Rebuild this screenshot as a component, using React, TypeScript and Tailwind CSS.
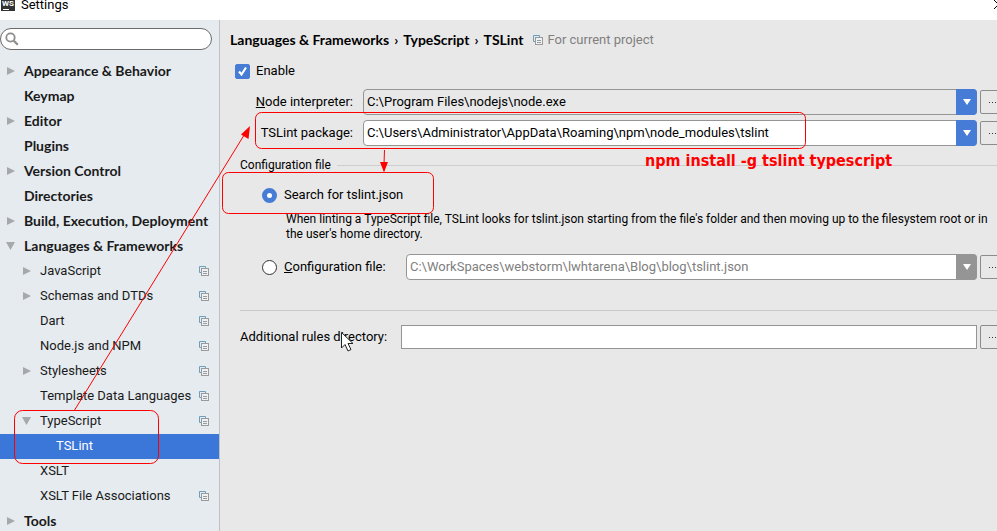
import { useId, useState } from "react";
import type { ReactNode } from "react";

type TreeItem = {
  label: string;
  level: 0 | 1 | 2;
  state?: "open" | "closed";
  project?: boolean;
};

const items: TreeItem[] = [
  { label: "Appearance & Behavior", level: 0, state: "closed" },
  { label: "Keymap", level: 0 },
  { label: "Editor", level: 0, state: "closed" },
  { label: "Plugins", level: 0 },
  { label: "Version Control", level: 0, state: "closed" },
  { label: "Directories", level: 0 },
  { label: "Build, Execution, Deployment", level: 0, state: "closed" },
  { label: "Languages & Frameworks", level: 0, state: "open" },
  { label: "JavaScript", level: 1, state: "closed", project: true },
  { label: "Schemas and DTDs", level: 1, state: "closed", project: true },
  { label: "Dart", level: 1, project: true },
  { label: "Node.js and NPM", level: 1, project: true },
  { label: "Stylesheets", level: 1, state: "closed", project: true },
  { label: "Template Data Languages", level: 1, project: true },
  { label: "TypeScript", level: 1, state: "open", project: true },
  { label: "TSLint", level: 2 },
  { label: "XSLT", level: 1 },
  { label: "XSLT File Associations", level: 1, project: true },
  { label: "Tools", level: 0, state: "closed" },
];

const indent = { 0: "pl-1.5", 1: "pl-[22px]", 2: "pl-[38px]" };

function ProjectIcon() {
  return (
    <svg className="size-2.5 shrink-0" viewBox="0 0 10 10" fill="none" aria-hidden="true">
      <path d="M2 6.500H.5V.5H6.500V2" stroke="#6aa0bd" />
      <rect x="2.5" y="2.5" width="7" height="7" stroke="#9a9a9a" fill="#eef1f3" />
      <path d="M4 5.500h4M4 7.500h4" stroke="#9a9a9a" />
    </svg>
  );
}

function Twisty({ state }: { state?: "open" | "closed" }) {
  return (
    <svg className="size-2.5 shrink-0" viewBox="0 0 10 10" fill="#a6a8aa" aria-hidden="true">
      {state === "closed" && <path d="M1 1 9 5 1 9Z" />}
      {state === "open" && <path d="M0 1H9L4.500 9Z" />}
    </svg>
  );
}

function Sidebar() {
  const [selected, setSelected] = useState("TSLint");
  return (
    <nav className="w-[220px] shrink-0 border-r border-[#bfc2c4] bg-[#e5ebef] pt-2" aria-label="Settings">
      <label className="mr-[7px] flex h-[22px] items-center rounded-full border border-[#6b6b6b] bg-white pl-1">
        <svg className="size-3.5 shrink-0" viewBox="0 0 14 14" fill="none" stroke="#8c8c8c" aria-hidden="true">
          <circle cx="5.5" cy="5.5" r="4.2" strokeWidth="1.8" />
          <path d="m8.800 8.800 4 4" strokeWidth="2.2" />
        </svg>
        <input type="search" aria-label="Search settings" className="min-w-0 flex-1 bg-transparent px-1 outline-none" />
      </label>
      <ul className="pt-[9px]">
        {items.map((item) => (
          <li key={item.label}>
            <button
              type="button"
              onClick={() => setSelected(item.label)}
              className={`flex h-[25px] w-full items-center gap-2 pr-2.5 pb-0.5 text-left whitespace-nowrap ${indent[item.level]} ${
                item.level === 0 ? "font-['Lato','Open_Sans',sans-serif] text-sm leading-5 font-bold" : ""
              } ${item.label === selected ? "bg-[#3b76d9] text-white" : "text-[#1a1a1a]"}`}
            >
              <Twisty state={item.state} />
              <span className="min-w-0 flex-1">{item.label}</span>
              {item.project && <ProjectIcon />}
            </button>
          </li>
        ))}
      </ul>
    </nav>
  );
}

function Combo({ id, value, tone }: { id: string; value: string; tone: "plain" | "white" | "muted" }) {
  const box = tone === "plain" ? "bg-[#e8e8e8]" : "bg-white";
  const arrow = tone === "muted" ? "bg-[#959595]" : "bg-[#467cd6]";
  return (
    <div className="relative min-w-0 flex-1">
      <select
        id={id}
        className={`block h-[26px] w-full appearance-none rounded-sm border border-[#959595] pr-6 pl-[3px] outline-none ${box} ${
          tone === "muted" ? "text-[#808080]" : "text-black"
        }`}
      >
        <option>{value}</option>
      </select>
      <span className={`pointer-events-none absolute inset-y-0 right-0 flex w-[21px] items-center justify-center rounded-r-sm ${arrow}`}>
        <svg className="h-1.5 w-2" viewBox="0 0 8 6" fill="#fff" aria-hidden="true">
          <path d="M0 0h8L4 6Z" />
        </svg>
      </span>
    </div>
  );
}

function BrowseButton({ label }: { label: string }) {
  return (
    <button
      type="button"
      aria-label={label}
      className="-mr-2 ml-[3px] flex h-6 w-[25px] shrink-0 items-center justify-center rounded-xs border border-[#8c8c8c] bg-[#e8e8e8]"
    >
      <svg className="h-px w-[9px]" viewBox="0 0 9 1" fill="#333" aria-hidden="true">
        <path d="M1 0h1v1H1ZM4 0h1v1H4ZM7 0h1v1H7Z" />
      </svg>
    </button>
  );
}

function Radio({ id, checked, onChange, children }: { id: string; checked: boolean; onChange: () => void; children: ReactNode }) {
  return (
    <div className="flex items-center gap-[7px]">
      <input
        id={id}
        type="radio"
        name="configuration"
        checked={checked}
        onChange={onChange}
        className="size-[15px] shrink-0 appearance-none rounded-full border border-[#333] bg-white checked:border-5 checked:border-[#467cd6]"
      />
      <label htmlFor={id}>{children}</label>
    </div>
  );
}

function Annotations() {
  return (
    <div className="pointer-events-none absolute inset-0">
      <svg className="absolute top-0 left-0 h-[531px] w-[997px]" viewBox="0 0 997 531" fill="none" stroke="#f00" aria-hidden="true">
        <rect x="255.5" y="112.5" width="550" height="36" rx="6" />
        <rect x="222.5" y="172.5" width="211" height="41" rx="6" />
        <rect x="14.5" y="410.5" width="144" height="53" rx="8" />
        <path d="M74 411 246 132M384.500 150 384 164" />
        <path d="M250 126 248.500 139 241 134.500ZM380 162h8l-4 10.500Z" fill="#f00" stroke="none" />
        <path d="M341.500 332.500v15.500l3.500-3.500 3 6.500 3-1.500-3-6h5Z" fill="#fff" stroke="#222" />
      </svg>
      <p className="absolute top-[149px] left-[645px] font-['DejaVu_Sans_Condensed','DejaVu_Sans',sans-serif] text-base leading-6 font-bold whitespace-nowrap text-[#f00]">
        npm install -g tslint typescript
      </p>
    </div>
  );
}

export default function App() {
  const id = useId();
  const [enabled, setEnabled] = useState(true);
  const [mode, setMode] = useState("search");
  return (
    <div className="relative flex h-screen flex-col overflow-hidden bg-[#e8e8e8] font-['Roboto','Open_Sans',sans-serif] text-[13px] leading-5 text-black">
      <header className="flex h-5 shrink-0 items-start bg-white pl-px">
        <span className="flex h-[11px] w-3.5 flex-col justify-between bg-[#333] pl-px text-[8px] leading-[7px] font-bold text-white" aria-hidden="true">
          WS
          <span className="mb-px ml-px h-px w-1.5 shrink-0 bg-white" />
        </span>
        <h1 className="ml-1.5 flex-1 leading-[10px]">Settings</h1>
        <button type="button" aria-label="Close" className="-mr-1.5">
          <svg className="h-2.5 w-[9px]" viewBox="0 0 9 10" fill="none" stroke="#000" aria-hidden="true">
            <path d="m0 0 9 9M0 9 9 0" />
          </svg>
        </button>
      </header>
      <div className="flex min-h-0 flex-1">
        <Sidebar />
        <main className="min-w-0 flex-1 overflow-hidden">
          <div className="flex h-10 items-center gap-2.5 pl-2.5 whitespace-nowrap">
            <h2 className="flex gap-[5px] font-['Lato','Open_Sans',sans-serif] text-sm leading-5 font-bold">
              Languages &amp; Frameworks <span>›</span> TypeScript <span>›</span> TSLint
            </h2>
            <span className="flex items-center gap-1 text-[#808080]">
              <ProjectIcon />
              For current project
            </span>
          </div>
          <div className="flex h-[22px] items-center gap-1.5 pl-[15px]">
            <span className="relative flex size-[15px]">
              <input
                id={`${id}-enable`}
                type="checkbox"
                checked={enabled}
                onChange={(e) => setEnabled(e.target.checked)}
                className="peer size-[15px] appearance-none rounded-xs border border-[#888] bg-white checked:border-[#467cd6] checked:bg-[#467cd6]"
              />
              <svg className="pointer-events-none absolute inset-0 hidden size-[15px] peer-checked:block" viewBox="0 0 15 15" fill="none" stroke="#fff" strokeWidth="2.2" aria-hidden="true">
                <path d="m4 7.500 2.500 3L11 3.500" />
              </svg>
            </span>
            <label htmlFor={`${id}-enable`}>Enable</label>
          </div>
          <div className="mt-[7px] flex flex-col gap-[5px]">
            <div className="flex items-center">
              <label htmlFor={`${id}-node`} className="w-[143px] shrink-0 pr-2.5 text-right whitespace-nowrap">
                <u>N</u>ode interpreter:
              </label>
              <Combo id={`${id}-node`} value="C:\Program Files\nodejs\node.exe" tone="plain" />
              <BrowseButton label="Browse for Node interpreter" />
            </div>
            <div className="flex items-center">
              <label htmlFor={`${id}-package`} className="w-[143px] shrink-0 pr-2.5 text-right whitespace-nowrap">
                TSLint package:
              </label>
              <Combo id={`${id}-package`} value="C:\Users\Administrator\AppData\Roaming\npm\node_modules\tslint" tone="white" />
              <BrowseButton label="Browse for TSLint package" />
            </div>
          </div>
          <fieldset className="mt-[9px] min-w-0">
            <legend className="flex w-full items-center gap-1.5 pl-5 text-xs leading-5">
              Configuration file
              <span className="h-px flex-1 bg-[#cdcdcd]" />
            </legend>
            <div className="pt-2.5 pl-[42px]">
              <Radio id={`${id}-search`} checked={mode === "search"} onChange={() => setMode("search")}>
                Search for tslint.json
              </Radio>
            </div>
            <p className="mt-[7px] pr-2 pl-[66px] text-xs leading-[15px]">
              When linting a TypeScript file, TSLint looks for tslint.json starting from the file's folder and then moving up to the filesystem root or in the user's home directory.
            </p>
            <div className="mt-3 flex items-center pl-[42px]">
              <div className="w-36 shrink-0">
                <Radio id={`${id}-file`} checked={mode === "file"} onChange={() => setMode("file")}>
                  <u>C</u>onfiguration file:
                </Radio>
              </div>
              <Combo id={`${id}-path`} value="C:\WorkSpaces\webstorm\lwhtarena\Blog\blog\tslint.json" tone="muted" />
              <BrowseButton label="Browse for configuration file" />
            </div>
          </fieldset>
          <hr className="mt-[30px] ml-5 border-[#c8c8c8]" />
          <div className="mt-3.5 flex items-center pl-5">
            <label htmlFor={`${id}-rules`} className="w-[161px] shrink-0 whitespace-nowrap">
              Additional rules directory:
            </label>
            <input id={`${id}-rules`} type="text" className="h-6 min-w-0 flex-1 border border-[#959595] bg-white px-1 outline-none" />
            <BrowseButton label="Browse for rules directory" />
          </div>
        </main>
      </div>
      <Annotations />
    </div>
  );
}
